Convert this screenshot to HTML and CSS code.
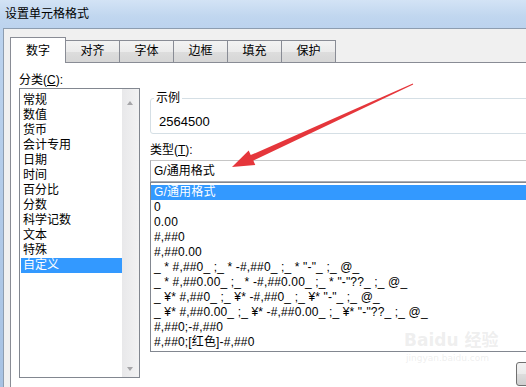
FILE: index.html
```html
<!DOCTYPE html>
<html lang="zh-CN">
<head>
    <meta charset="UTF-8">
    <title>设置单元格格式</title>
    <link rel="stylesheet" href="styles.css">
</head>
<body>
    <div class="window">
        <div class="titlebar">设置单元格格式</div>
        <div class="frame">
            <div class="dialog">
                <!-- Tabs -->
                <div class="tabs">
                    <div class="tab active">数字</div>
                    <div class="tab">对齐</div>
                    <div class="tab">字体</div>
                    <div class="tab">边框</div>
                    <div class="tab">填充</div>
                    <div class="tab">保护</div>
                </div>

                <div class="panel">
                    <!-- Category list -->
                    <div class="category">
                        <div class="label">分类(<u>C</u>):</div>
                        <div class="listbox cat-list">
                            <div class="items">
                                <div class="item">常规</div>
                                <div class="item">数值</div>
                                <div class="item">货币</div>
                                <div class="item">会计专用</div>
                                <div class="item">日期</div>
                                <div class="item">时间</div>
                                <div class="item">百分比</div>
                                <div class="item">分数</div>
                                <div class="item">科学记数</div>
                                <div class="item">文本</div>
                                <div class="item">特殊</div>
                                <div class="item selected">自定义</div>
                            </div>
                            <div class="scrollbar">
                                <span class="sb-arrow up"></span>
                                <span class="sb-arrow down"></span>
                            </div>
                        </div>
                    </div>

                    <!-- Details -->
                    <div class="detail">
                        <fieldset class="sample">
                            <legend>示例</legend>
                            <div class="sample-value">2564500</div>
                        </fieldset>
                        <div class="label type-label">类型(<u>T</u>):</div>
                        <div class="type-input">G/通用格式</div>
                        <div class="listbox type-list">
                            <div class="row selected">G/通用格式</div>
                            <div class="row">0</div>
                            <div class="row">0.00</div>
                            <div class="row">#,##0</div>
                            <div class="row">#,##0.00</div>
                            <div class="row">_ * #,##0_ ;_ * -#,##0_ ;_ * "-"_ ;_ @_</div>
                            <div class="row">_ * #,##0.00_ ;_ * -#,##0.00_ ;_ * "-"??_ ;_ @_</div>
                            <div class="row">_ ¥* #,##0_ ;_ ¥* -#,##0_ ;_ ¥* "-"_ ;_ @_</div>
                            <div class="row">_ ¥* #,##0.00_ ;_ ¥* -#,##0.00_ ;_ ¥* "-"??_ ;_ @_</div>
                            <div class="row">#,##0;-#,##0</div>
                            <div class="row">#,##0;[红色]-#,##0</div>
                        </div>
                        <div class="btn-row">
                            <button class="btn"></button>
                        </div>
                    </div>
                </div>
            </div>
        </div>

        <!-- Annotation arrow drawn over the screenshot -->
        <svg class="callout" width="526" height="387" viewBox="0 0 526 387">
            <polygon points="412.8,83.5 250.7,155.1 248.7,150.5 232,167 255.3,165.1 253.3,160.5 413.2,84.5" fill="#e5363b"/>
        </svg>

        <div class="watermark">
            <div class="wm-logo">Bai<span class="wm-paw">du</span> 经验</div>
            <div class="wm-url">jingyan.baidu.com</div>
        </div>
    </div>
</body>
</html>
```

FILE: styles.css
```css
body {
    margin: 0;
    width: 526px;
    height: 387px;
    overflow: hidden;
    font-family: "Liberation Sans", "Noto Sans CJK SC", sans-serif;
    font-size: 12px;
    color: #000;
    background: #f0f0f0;
}
.window {
    position: relative;
    width: 526px;
    height: 387px;
}
.titlebar {
    height: 28px;
    line-height: 28px;
    padding-left: 5px;
    background: linear-gradient(to bottom, #d3e3f5, #c0d6ef 60%, #bcd3ee);
}
.frame {
    display: flex;
    height: 359px;
    padding-left: 3px;
    background: linear-gradient(to bottom, #bcd3ee, #a7c2e3);
}
.dialog {
    flex: 1;
    background: #f0f0f0;
    border-top: 1px solid #8d9db0;
    border-left: 1px solid #8d9db0;
    padding: 8px 0 0 6px;
    min-width: 0;
}
.tabs {
    display: flex;
    align-items: flex-end;
    height: 26px;
    margin-bottom: -1px;
    position: relative;
    z-index: 1;
}
.tab {
    width: 53px;
    height: 21px;
    line-height: 21px;
    margin-bottom: 1px;
    text-align: center;
    border: 1px solid #898c95;
    border-bottom: none;
    background: linear-gradient(to bottom, #f3f3f3, #ebebeb 50%, #dddddd 51%, #d6d6d6);
}
.tab + .tab {
    margin-left: -1px;
}
.tab.active {
    width: 54px;
    height: 25px;
    line-height: 27px;
    margin-bottom: 0;
    background: #fff;
}
.tab.active + .tab {
    margin-left: 0;
    border-left: none;
}
.panel {
    display: flex;
    gap: 10px;
    height: 330px;
    border: 1px solid #898c95;
    border-right: none;
    background: #fff;
    padding: 9px 0 0 8px;
}
.label {
    height: 16px;
    line-height: 16px;
}
.category {
    width: 121px;
    flex-shrink: 0;
}
.listbox {
    border: 1px solid #828790;
    background: #fff;
    box-sizing: border-box;
}
.cat-list {
    display: flex;
    height: 290px;
}
.cat-list .items {
    flex: 1;
    padding: 4px 0 0 1px;
}
.item {
    height: 15px;
    line-height: 15px;
    padding-left: 2px;
}
.item.selected,
.row.selected {
    background: #3399ff;
    color: #fff;
}
.scrollbar {
    width: 17px;
    position: relative;
    background: linear-gradient(to right, #e8e8ea, #f2f2f3);
}
.sb-arrow {
    position: absolute;
    left: 5px;
    width: 0;
    height: 0;
    border-left: 3px solid transparent;
    border-right: 3px solid transparent;
}
.sb-arrow.up {
    top: 12px;
    border-bottom: 4px solid #a5a5a8;
}
.sb-arrow.down {
    bottom: 6px;
    border-top: 4px solid #a5a5a8;
}
.detail {
    width: 400px;
    flex-shrink: 0;
}
.sample {
    margin: 18px 0 0;
    padding: 8px 3px 3px;
    border: 1px solid #d5dfe5;
    border-radius: 3px;
}
.sample legend {
    padding: 0 2px;
    line-height: 16px;
}
.sample-value {
    line-height: 16px;
    padding-left: 5px;
    font-size: 13px;
}
.type-label {
    margin-top: 8px;
}
.type-input {
    margin-top: 2px;
    height: 22px;
    line-height: 20px;
    box-sizing: border-box;
    border: 1px solid #abadb3;
    border-top-color: #c6c6c6;
    padding-left: 3px;
}
.type-list {
    height: 170px;
    padding-top: 2px;
}
.row {
    height: 15px;
    line-height: 15px;
    padding-left: 3px;
    white-space: pre;
    letter-spacing: 0.15px;
}
.btn-row {
    display: flex;
    padding: 10px 0 0 366px;
}
.btn {
    width: 75px;
    height: 24px;
    padding: 0;
    border: 1px solid #707070;
    border-radius: 3px;
    background: linear-gradient(to bottom, #f2f2f2, #ebebeb 50%, #dddddd 51%, #cfcfcf);
}
.callout {
    position: absolute;
    left: 0;
    top: 0;
    pointer-events: none;
}
.watermark {
    position: absolute;
    left: 404px;
    top: 330px;
    color: rgba(200, 200, 200, 0.3);
    font-family: "DejaVu Sans", "Noto Sans CJK SC", sans-serif;
    pointer-events: none;
}
.wm-logo {
    font-size: 17px;
    font-weight: bold;
    line-height: 20px;
}
.wm-url {
    font-size: 9px;
    line-height: 16px;
    padding-left: 2px;
}
```
